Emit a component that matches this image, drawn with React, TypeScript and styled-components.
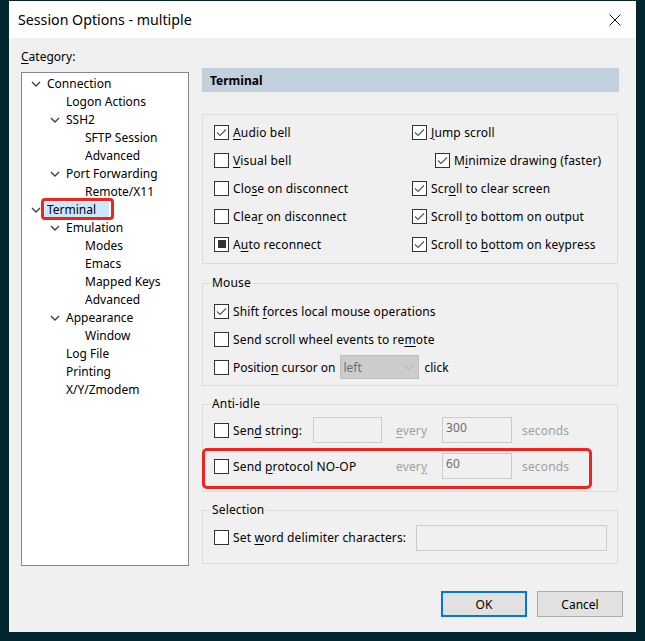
import React from 'react';
import styled, { createGlobalStyle } from 'styled-components';

const GlobalStyle = createGlobalStyle`
  html, body { margin: 0; padding: 0; background: #01262f; }
  body {
    font-family: "Noto Sans", "Open Sans", sans-serif;
    font-size: 12px;
    color: #000;
  }
  * { box-sizing: border-box; }
`;

const Desktop = styled.div`
  width: 645px;
  height: 641px;
  padding: 1px 0 0 9px;
  overflow: hidden;
`;

const Window = styled.div`
  width: 627px;
  height: 631px;
  background: #f0f0f0;
  display: flex;
  flex-direction: column;
`;

const TitleBar = styled.div`
  height: 37px;
  background: #fff;
  display: flex;
  align-items: center;
  justify-content: space-between;
  padding: 0 15px 0 9px;
`;

const Title = styled.div`
  font-size: 14.2px;
  color: #000;
`;

const Body = styled.div`
  flex: 1;
  display: flex;
  flex-direction: column;
  padding: 0 13px 0 12px;
`;

const CategoryLabel = styled.div`
  height: 30px;
  padding-top: 11px;
  line-height: 16px;
`;

const Main = styled.div`
  display: flex;
  gap: 13px;
  height: 498px;
`;

const Tree = styled.div`
  width: 168px;
  height: 494px;
  margin-top: 4px;
  background: #fff;
  border: 1px solid #828790;
  padding-top: 2px;
`;

const TreeRow = styled.div<{ $level: number }>`
  height: 18px;
  display: flex;
  align-items: center;
  padding-left: ${(p) => 6 + p.$level * 19}px;
`;

const Toggle = styled.span`
  width: 16px;
  height: 18px;
  display: flex;
  align-items: center;
  justify-content: center;
`;

const TreeText = styled.span<{ $selected?: boolean }>`
  position: relative;
  line-height: 16px;
  margin-left: ${(p) => (p.$selected ? 1 : 3)}px;
  padding: ${(p) => (p.$selected ? '0 13px 0 2px' : '0')};
  background: ${(p) => (p.$selected ? '#cce8ff' : 'transparent')};
`;

const RedMark = styled.span`
  position: absolute;
  left: -4px;
  right: -5px;
  top: -4px;
  bottom: -2px;
  border: 3px solid #f2231d;
  border-radius: 4px;
  pointer-events: none;
`;

const Panel = styled.div`
  width: 417px;
  display: flex;
  flex-direction: column;
  letter-spacing: 0.15px;
`;

const Header = styled.div`
  height: 24px;
  background: #c2d0dd;
  font-weight: bold;
  letter-spacing: 0;
  padding-left: 8px;
  display: flex;
  align-items: center;
`;

const Group = styled.div<{ $top: number; $height: number; $padTop: number }>`
  position: relative;
  width: 416px;
  height: ${(p) => p.$height}px;
  margin-top: ${(p) => p.$top}px;
  border: 1px solid #dcdcdc;
  padding: ${(p) => p.$padTop}px 0 0 11px;
`;

const Legend = styled.span`
  position: absolute;
  top: -9px;
  left: 7px;
  padding: 0 2px;
  background: #f0f0f0;
  line-height: 16px;
`;

const CheckGrid = styled.div`
  display: grid;
  grid-template-columns: 198px 1fr;
  grid-auto-rows: 28px;
`;

const CheckItem = styled.label<{ $indent?: number }>`
  display: flex;
  align-items: center;
  gap: 4px;
  height: 28px;
  padding-left: ${(p) => p.$indent || 0}px;
  white-space: nowrap;
`;

const Box = styled.span`
  width: 15px;
  height: 15px;
  flex: none;
  background: #fff;
  border: 1px solid #333;
  display: flex;
  align-items: center;
  justify-content: center;
`;

const Indeterminate = styled.span`
  width: 8px;
  height: 8px;
  background: #333;
`;

const U = styled.span`
  text-decoration: underline;
  text-underline-offset: 2px;
  text-decoration-thickness: 1px;
`;

const Inline = styled.div`
  display: flex;
  align-items: center;
  height: 28px;
  white-space: nowrap;
  letter-spacing: 0;
`;

const Select = styled.div`
  width: 79px;
  height: 24px;
  margin: 0 6px 0 4px;
  background: #cccccc;
  border: 1px solid #bfbfbf;
  color: #6d6d6d;
  display: flex;
  align-items: center;
  justify-content: space-between;
  padding: 0 5px 0 3px;
`;

const IdleGrid = styled.div`
  display: grid;
  grid-template-columns: 99px 69px 60px 70px 1fr;
  grid-auto-rows: 26px;
  row-gap: 10px;
  align-items: center;
`;

const Disabled = styled.span<{ $pad?: number }>`
  color: #a0a0a0;
  padding-left: ${(p) => p.$pad || 0}px;
`;

const Field = styled.div<{ $width?: number }>`
  width: ${(p) => (p.$width ? `${p.$width}px` : '100%')};
  height: 26px;
  border: 1px solid #cccccc;
  background: #f0f0f0;
  color: #6d6d6d;
  padding: 2px 0 0 3px;
  line-height: 16px;
`;

const SelectionRow = styled.div`
  display: flex;
  align-items: center;
  gap: 10px;
  height: 27px;
`;

const RedBox = styled.div`
  position: absolute;
  left: -1px;
  top: 43px;
  width: 390px;
  height: 41px;
  border: 3px solid #f2231d;
  border-radius: 5px;
  pointer-events: none;
`;

const Footer = styled.div`
  margin-top: 25px;
  display: flex;
  justify-content: flex-end;
  gap: 10px;
`;

const Button = styled.button<{ $default?: boolean }>`
  width: 86px;
  height: 26px;
  font-family: inherit;
  font-size: 12px;
  color: #000;
  background: #e1e1e1;
  border: ${(p) => (p.$default ? '2px solid #0078d7' : '1px solid #adadad')};
  padding: 0;
`;

const Chevron = () => (
  <svg width="10" height="6" viewBox="0 0 10 6">
    <path d="M1 1 L5 5 L9 1" fill="none" stroke="#404040" strokeWidth="1.4" />
  </svg>
);

const Mnemonic = ({ text }: { text: string }) => {
  const i = text.indexOf('&');
  if (i < 0) return <>{text}</>;
  return (
    <>
      {text.slice(0, i)}
      <U>{text[i + 1]}</U>
      {text.slice(i + 2)}
    </>
  );
};

type CheckState = 'on' | 'off' | 'mixed';

const CheckBox = ({ state }: { state: CheckState }) => (
  <Box>
    {state === 'on' && (
      <svg width="11" height="9" viewBox="0 0 11 9">
        <path d="M1 4.5 L4 7.5 L10 1.5" fill="none" stroke="#555" strokeWidth="1.1" />
      </svg>
    )}
    {state === 'mixed' && <Indeterminate />}
  </Box>
);

const Check = ({ label, state, indent }: { label: string; state: CheckState; indent?: number }) => (
  <CheckItem $indent={indent}>
    <CheckBox state={state} />
    <span>
      <Mnemonic text={label} />
    </span>
  </CheckItem>
);

const treeItems: { label: string; level: number; open?: boolean; selected?: boolean }[] = [
  { label: 'Connection', level: 0, open: true },
  { label: 'Logon Actions', level: 1 },
  { label: 'SSH2', level: 1, open: true },
  { label: 'SFTP Session', level: 2 },
  { label: 'Advanced', level: 2 },
  { label: 'Port Forwarding', level: 1, open: true },
  { label: 'Remote/X11', level: 2 },
  { label: 'Terminal', level: 0, open: true, selected: true },
  { label: 'Emulation', level: 1, open: true },
  { label: 'Modes', level: 2 },
  { label: 'Emacs', level: 2 },
  { label: 'Mapped Keys', level: 2 },
  { label: 'Advanced', level: 2 },
  { label: 'Appearance', level: 1, open: true },
  { label: 'Window', level: 2 },
  { label: 'Log File', level: 1 },
  { label: 'Printing', level: 1 },
  { label: 'X/Y/Zmodem', level: 1 },
];

export default function App() {
  return (
    <>
      <GlobalStyle />
      <Desktop>
        <Window>
          <TitleBar>
            <Title>Session Options - multiple</Title>
            <svg width="12" height="12" viewBox="0 0 12 12">
              <path d="M0.5 0.5 L11.5 11.5 M11.5 0.5 L0.5 11.5" stroke="#111" strokeWidth="1" />
            </svg>
          </TitleBar>
          <Body>
            <CategoryLabel>
              <Mnemonic text="&Category:" />
            </CategoryLabel>
            <Main>
              <Tree>
                {treeItems.map((item, i) => (
                  <TreeRow key={i} $level={item.level}>
                    <Toggle>{item.open && <Chevron />}</Toggle>
                    <TreeText $selected={item.selected}>
                      {item.label}
                      {item.selected && <RedMark />}
                    </TreeText>
                  </TreeRow>
                ))}
              </Tree>
              <Panel>
                <Header>Terminal</Header>
                <Group $top={22} $height={150} $padTop={3}>
                  <CheckGrid>
                    <Check label="&Audio bell" state="on" />
                    <Check label="&Jump scroll" state="on" />
                    <Check label="&Visual bell" state="off" />
                    <Check label="M&inimize drawing (faster)" state="on" indent={23} />
                    <Check label="Clo&se on disconnect" state="off" />
                    <Check label="Scr&oll to clear screen" state="on" />
                    <Check label="Clea&r on disconnect" state="off" />
                    <Check label="Scroll &to bottom on output" state="on" />
                    <Check label="A&uto reconnect" state="mixed" />
                    <Check label="Scroll to &bottom on keypress" state="on" />
                  </CheckGrid>
                </Group>
                <Group $top={19} $height={103} $padTop={13}>
                  <Legend>Mouse</Legend>
                  <Check label="Shift &forces local mouse operations" state="on" />
                  <Check label="Send scroll wheel events to re&mote" state="off" />
                  <Inline>
                    <Check label="Positio&n cursor on" state="off" />
                    <Select>
                      <span>left</span>
                      <svg width="9" height="5" viewBox="0 0 9 5">
                        <path d="M0.5 0.5 L4.5 4.5 L8.5 0.5" fill="none" stroke="#a8a8a8" strokeWidth="1" />
                      </svg>
                    </Select>
                    <span>click</span>
                  </Inline>
                </Group>
                <Group $top={18} $height={88} $padTop={12}>
                  <Legend>Anti-idle</Legend>
                  <IdleGrid>
                    <Check label="Sen&d string:" state="off" />
                    <Field $width={69} />
                    <Disabled $pad={14}>
                      <Mnemonic text="&every" />
                    </Disabled>
                    <Field $width={70}>300</Field>
                    <Disabled $pad={10}>seconds</Disabled>
                    <div style={{ gridColumn: 'span 2' }}>
                      <Check label="Send &protocol NO-OP" state="off" />
                    </div>
                    <Disabled $pad={14}>
                      <Mnemonic text="ever&y" />
                    </Disabled>
                    <Field $width={70}>60</Field>
                    <Disabled $pad={10}>seconds</Disabled>
                  </IdleGrid>
                  <RedBox />
                </Group>
                <Group $top={18} $height={54} $padTop={13}>
                  <Legend>Selection</Legend>
                  <SelectionRow>
                    <Check label="Set &word delimiter characters:" state="off" />
                    <Field $width={191} />
                  </SelectionRow>
                </Group>
              </Panel>
            </Main>
            <Footer>
              <Button $default>OK</Button>
              <Button>Cancel</Button>
            </Footer>
          </Body>
        </Window>
      </Desktop>
    </>
  );
}
